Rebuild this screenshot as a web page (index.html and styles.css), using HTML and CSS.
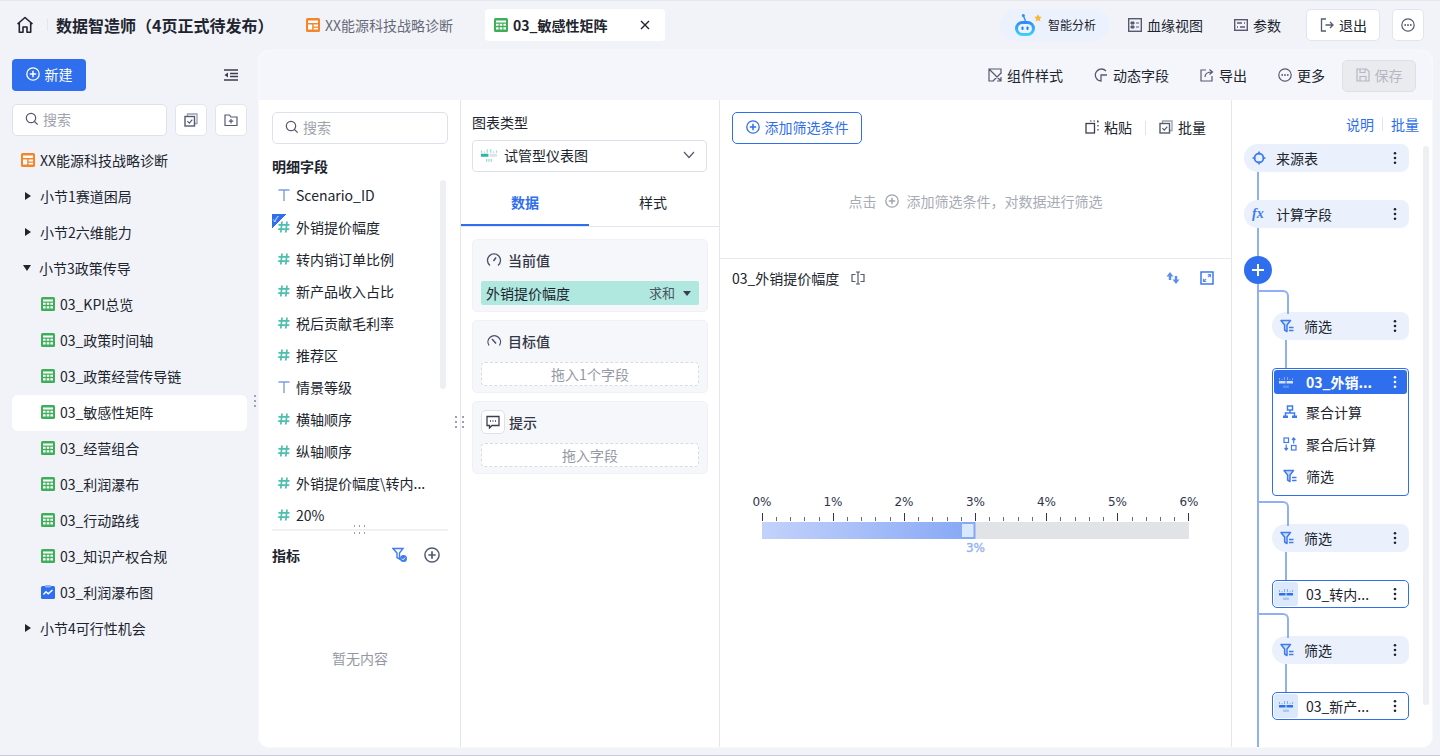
FILE: index.html
```html
<!DOCTYPE html>
<html lang="zh-CN">
<head>
  <meta charset="UTF-8" />
  <title>数据智造师</title>
  <link rel="stylesheet" href="styles.css">
</head>
<body>

<svg class="sprite" width="0" height="0">
  <symbol id="i-dash" viewBox="0 0 14 14"><rect width="14" height="14" rx="1.5" fill="#f5852b"/><path d="M2 2.500h10v2.600H2zM2 6.600h4.200v5H2zM7.600 6.600H12v1.900H7.600zM7.600 9.700H12v1.900H7.600z" fill="#fff"/></symbol>
  <symbol id="i-table" viewBox="0 0 14 14"><rect width="14" height="14" rx="1.500" fill="#3fae5a"/><path d="M2 2.400h10v2H2zM2 5.800h2.600v2H2zM5.700 5.800h2.600v2H5.700zM9.400 5.800H12v2H9.400zM2 9.200h2.600v2.200H2zM5.700 9.200h2.600v2.200H5.700zM9.400 9.200H12v2.200H9.400z" fill="#fff"/></symbol>
  <symbol id="i-chart" viewBox="0 0 14 14"><rect y="1" width="14" height="13" rx="1.500" fill="#2f6fed"/><rect x="4" width="6" height="2.400" rx="1" fill="#8fb0f5"/><path d="M2.500 9.500 5 6.800l2.200 2L11.500 5" fill="none" stroke="#fff" stroke-width="1.400"/></symbol>
  <symbol id="i-search" viewBox="0 0 14 14"><circle cx="6" cy="6" r="4.700" fill="none" stroke="currentColor" stroke-width="1.200"/><path d="m9.500 9.500 3.200 3.200" stroke="currentColor" stroke-width="1.200"/></symbol>
  <symbol id="i-plus" viewBox="0 0 14 14"><circle cx="7" cy="7" r="6.200" fill="none" stroke="currentColor" stroke-width="1.300"/><path d="M7 3.800v6.400M3.800 7h6.400" stroke="currentColor" stroke-width="1.500"/></symbol>
  <symbol id="i-more" viewBox="0 0 14 14"><circle cx="7" cy="7" r="6.200" fill="none" stroke="currentColor" stroke-width="1.200"/><circle cx="4.200" cy="7" r=".9" fill="currentColor"/><circle cx="7" cy="7" r=".9" fill="currentColor"/><circle cx="9.800" cy="7" r=".9" fill="currentColor"/></symbol>
  <symbol id="i-check" viewBox="0 0 14 14"><path d="M3.500 3V1H13v9.500h-2" fill="none" stroke="#9a9eb0" stroke-width="1.300"/><rect x="1" y="3.500" width="9.500" height="9.500" fill="none" stroke="#555a70" stroke-width="1.400"/><path d="m3.400 8.200 1.900 1.900 3-3.400" fill="none" stroke="#555a70" stroke-width="1.200"/></symbol>
  <symbol id="i-kebab" viewBox="0 0 4 14"><circle cx="2" cy="2.200" r="1.300" fill="currentColor"/><circle cx="2" cy="7" r="1.300" fill="currentColor"/><circle cx="2" cy="11.800" r="1.300" fill="currentColor"/></symbol>
  <symbol id="i-hash" viewBox="0 0 12 12"><path d="M4 .5 2.800 11.500M9 .5 7.800 11.500M.5 3.800h11M.2 8.200h11" fill="none" stroke="#4bbfae" stroke-width="1.700"/></symbol>
  <symbol id="i-text" viewBox="0 0 12 12"><path d="M.5 1h11M6 1v11" fill="none" stroke="#7b9fe3" stroke-width="1.400"/></symbol>
  <symbol id="i-filter" viewBox="0 0 14 14"><path d="M1 1.500h9.500L7 6v6.500L4.600 11V6z" fill="#cfdefb" stroke="#3f7bf0" stroke-width="1.500" stroke-linejoin="round"/><path d="M9 8.500h4.500M9 11.500h4.500" stroke="#3f7bf0" stroke-width="1.300"/></symbol>
  <symbol id="i-gauge" viewBox="0 0 14 12"><path d="M0 2h1v2H0zM2.500 3h1v1h-1zM5 1h1v3H5zM8 1h1v3H8zM10.500 3h1v1h-1zM13 2h1v2h-1z" fill="currentColor" opacity=".5"/><path d="M0 5h6.500v2.500H0z" fill="currentColor"/><path d="M7.500 5H14v2.500H7.500z" style="fill: var(--gauge-right, currentColor)"/><path d="M4.500 9.500h1V12h-1zM6.500 9.500h1V12h-1zM8.500 9.500h1V12h-1z" fill="currentColor" opacity=".55"/></symbol>
</svg>

<header class="topbar">
  <svg class="home" width="18" height="18" viewBox="0 0 18 18"><path d="M1.500 8 9 1.500 16.500 8M3.300 7v9.300H7V11h4v5.300h3.700V7" fill="none" stroke="#20242e" stroke-width="1.600" stroke-linejoin="round"/></svg>
  <span class="top-divider"></span>
  <strong class="app-title">数据智造师（4页正式待发布）</strong>
  <div class="tab"><svg width="14" height="14"><use href="#i-dash"/></svg>XX能源科技战略诊断</div>
  <div class="tab active"><svg width="14" height="14"><use href="#i-table"/></svg><b>03_敏感性矩阵</b>
    <svg class="tab-close" width="10" height="10" viewBox="0 0 10 10"><path d="m1 1 8 8M9 1 1 9" stroke="#20242e" stroke-width="1.400"/></svg>
  </div>
  <div class="top-right">
    <div class="ai-pill">
      <svg width="27" height="24" viewBox="0 0 27 24">
        <defs><linearGradient id="robot" x1="0" y1="0" x2="0" y2="1"><stop offset="0" stop-color="#2f86f5"/><stop offset="1" stop-color="#3fd4f7"/></linearGradient></defs>
        <path d="M10.500 8 8.500 3" stroke="#2f8ff0" stroke-width="1.400"/><circle cx="8.300" cy="2.500" r="1.500" fill="#2f8ff0"/>
        <path d="m23 1 1.200 2.500 2.600.5-1.900 1.800.5 2.700-2.400-1.300-2.400 1.300.5-2.700-1.900-1.800 2.600-.5z" fill="#f6b93b"/>
        <rect y="8" width="20" height="15" rx="7.500" fill="url(#robot)"/><rect x="3" y="11" width="14" height="9" rx="4.500" fill="#e8f4ff"/>
        <rect x="6.500" y="13.500" width="2" height="3.500" rx="1" fill="#2f6fed"/><rect x="11.500" y="13.500" width="2" height="3.500" rx="1" fill="#2f6fed"/>
      </svg>
      <span>智能分析</span>
    </div>
    <a class="top-link"><svg width="14" height="14" viewBox="0 0 14 14"><rect x=".7" y=".7" width="12.600" height="12.600" fill="none" stroke="#555a70" stroke-width="1.400"/><path d="M3 4h3v2H3zM3 8h3v2H3zM8 5h3M8 9h3" fill="#555a70" stroke="#555a70"/></svg>血缘视图</a>
    <a class="top-link"><svg width="14" height="14" viewBox="0 0 14 14"><rect x=".7" y="1.700" width="12.600" height="10.600" fill="none" stroke="#555a70" stroke-width="1.400"/><path d="M3 5h5M10 5h1M3 9h1M6 9h5" stroke="#555a70" stroke-width="1.300"/></svg>参数</a>
    <button class="btn exit"><svg width="16" height="16" viewBox="0 0 16 16"><path d="M7 2H2.500v12H7M6.500 8H14M11 5l3 3-3 3" fill="none" stroke="#555a70" stroke-width="1.300"/></svg>退出</button>
    <button class="btn square"><svg width="14" height="14" color="#555a70"><use href="#i-more"/></svg></button>
  </div>
</header>

<div class="app">
  <aside class="sidebar">
    <div class="side-head">
      <button class="btn-new"><svg width="14" height="14"><use href="#i-plus"/></svg>新建</button>
      <svg width="14" height="12" viewBox="0 0 14 12"><path d="M0 1h14M6 4.500h8M6 7.500h8M0 11h14" stroke="#3a3f50" stroke-width="1.400"/><path d="M4 3.500v5L.5 6z" fill="#3a3f50"/></svg>
    </div>
    <div class="side-search">
      <label class="search"><svg width="14" height="14"><use href="#i-search"/></svg><span>搜索</span></label>
      <button class="btn square"><svg width="14" height="14"><use href="#i-check"/></svg></button>
      <button class="btn square"><svg width="14" height="14" viewBox="0 0 14 14"><path d="M1 2h4.500L7 4h6v8.500H1z" fill="none" stroke="#555a70" stroke-width="1.200"/><path d="M7 6v4.500M4.800 8.200h4.500" stroke="#555a70" stroke-width="1.200"/></svg></button>
    </div>
    <ul class="tree">
      <li class="tree-root"><svg width="14" height="14"><use href="#i-dash"/></svg>XX能源科技战略诊断</li>
      <li class="tree-group"><i class="arrow"></i>小节1赛道困局</li>
      <li class="tree-group"><i class="arrow"></i>小节2六维能力</li>
      <li class="tree-group"><i class="arrow open"></i>小节3政策传导</li>
      <li class="tree-leaf"><svg width="14" height="14"><use href="#i-table"/></svg>03_KPI总览</li>
      <li class="tree-leaf"><svg width="14" height="14"><use href="#i-table"/></svg>03_政策时间轴</li>
      <li class="tree-leaf"><svg width="14" height="14"><use href="#i-table"/></svg>03_政策经营传导链</li>
      <li class="tree-leaf selected"><svg width="14" height="14"><use href="#i-table"/></svg>03_敏感性矩阵</li>
      <li class="tree-leaf"><svg width="14" height="14"><use href="#i-table"/></svg>03_经营组合</li>
      <li class="tree-leaf"><svg width="14" height="14"><use href="#i-table"/></svg>03_利润瀑布</li>
      <li class="tree-leaf"><svg width="14" height="14"><use href="#i-table"/></svg>03_行动路线</li>
      <li class="tree-leaf"><svg width="14" height="14"><use href="#i-table"/></svg>03_知识产权合规</li>
      <li class="tree-leaf"><svg width="14" height="14"><use href="#i-chart"/></svg>03_利润瀑布图</li>
      <li class="tree-group"><i class="arrow"></i>小节4可行性机会</li>
    </ul>
  </aside>

  <main class="panel">
    <div class="toolbar">
      <a class="tool"><svg width="14" height="14" viewBox="0 0 14 14"><path d="M13 6V1H1v12h5M1 1l12 12M5 13l8-8M9 13h4V9" fill="none" stroke="#555a70" stroke-width="1.200"/></svg>组件样式</a>
      <a class="tool"><svg width="14" height="14" viewBox="0 0 14 14"><path d="M12 3.200A6 6 0 1 0 7 13V7h6" fill="none" stroke="#555a70" stroke-width="1.300"/></svg>动态字段</a>
      <a class="tool"><svg width="14" height="14" viewBox="0 0 14 14"><path d="M6 2H1v11h11V8M5 9c0-3 2-5 7-5M9.500 1.500 12.500 4l-3 2.500" fill="none" stroke="#555a70" stroke-width="1.200"/></svg>导出</a>
      <a class="tool"><svg width="14" height="14" color="#555a70"><use href="#i-more"/></svg>更多</a>
      <button class="btn-save"><svg width="14" height="14" viewBox="0 0 14 14"><path d="M1 1h9.500L13 3.500V13H1zM4 1v3.500h5V1M4 13V8.500h6V13" fill="none" stroke="#b5b8c2" stroke-width="1.200"/></svg>保存</button>
    </div>

    <div class="columns">
      <section class="col-fields">
        <label class="search"><svg width="14" height="14"><use href="#i-search"/></svg><span>搜索</span></label>
        <h3 class="section-title">明细字段</h3>
        <div class="field-wrap">
          <ul class="field-list">
            <li><svg width="12" height="12"><use href="#i-text"/></svg><span>Scenario_ID</span></li>
            <li class="checked"><svg width="12" height="12"><use href="#i-hash"/></svg><span>外销提价幅度</span></li>
            <li><svg width="12" height="12"><use href="#i-hash"/></svg><span>转内销订单比例</span></li>
            <li><svg width="12" height="12"><use href="#i-hash"/></svg><span>新产品收入占比</span></li>
            <li><svg width="12" height="12"><use href="#i-hash"/></svg><span>税后贡献毛利率</span></li>
            <li><svg width="12" height="12"><use href="#i-hash"/></svg><span>推荐区</span></li>
            <li><svg width="12" height="12"><use href="#i-text"/></svg><span>情景等级</span></li>
            <li><svg width="12" height="12"><use href="#i-hash"/></svg><span>横轴顺序</span></li>
            <li><svg width="12" height="12"><use href="#i-hash"/></svg><span>纵轴顺序</span></li>
            <li><svg width="12" height="12"><use href="#i-hash"/></svg><span>外销提价幅度\转内...</span></li>
            <li><svg width="12" height="12"><use href="#i-hash"/></svg><span>20%</span></li>
          </ul>
          <div class="field-scroll"></div>
        </div>
        <div class="split"><span class="grip-h"></span></div>
        <div class="metric-head">
          <h3 class="section-title">指标</h3>
          <svg width="16" height="16" viewBox="0 0 16 16"><path d="M1 1.500h10L7.500 6v6L5 10.500V6z" fill="none" stroke="#3f7bf0" stroke-width="1.400"/><circle cx="11.500" cy="11.500" r="3.500" fill="#3f7bf0"/><path d="m9.800 11.500 1.300 1.300 2-2.200" fill="none" stroke="#fff"/></svg>
          <svg width="16" height="16" color="#555a70" viewBox="0 0 14 14"><use href="#i-plus"/></svg>
        </div>
        <p class="empty">暂无内容</p>
      </section>

      <section class="col-config">
        <div class="config-top">
          <div class="label">图表类型</div>
          <div class="select">
            <svg class="select-icon" width="16" height="14" color="#2bb5a4"><use href="#i-gauge"/></svg>
            <span>试管型仪表图</span>
            <svg class="chev" width="12" height="8" viewBox="0 0 12 8"><path d="m1 1 5 5.500L11 1" fill="none" stroke="#555a70" stroke-width="1.200"/></svg>
          </div>
        </div>
        <div class="tabs"><div class="tabs-item on">数据</div><div class="tabs-item">样式</div></div>
        <div class="cards">
          <div class="card">
            <div class="card-head"><svg width="16" height="16" viewBox="0 0 16 16"><path d="M4 13.500a6.500 6.500 0 1 1 8 0" fill="none" stroke="#4a4f68" stroke-width="1.300"/><path d="m7.500 9 2.500-3.500" stroke="#4a4f68" stroke-width="1.500"/></svg>当前值</div>
            <div class="pill"><span>外销提价幅度</span><em>求和</em><i class="caret"></i></div>
          </div>
          <div class="card">
            <div class="card-head"><svg width="16" height="16" viewBox="0 0 16 16"><path d="M3 12.500a6.300 6.300 0 1 1 10.500 0" fill="none" stroke="#4a4f68" stroke-width="1.300"/><path d="m6 6 4 4.500" stroke="#4a4f68" stroke-width="1.500"/></svg>目标值</div>
            <div class="drop">拖入1个字段</div>
          </div>
          <div class="card">
            <div class="card-head tip"><span class="tip-icon"><svg width="14" height="14" viewBox="0 0 14 14"><path d="M1 1.500h12v9H6L3.500 13v-2.500H1z" fill="none" stroke="#3a3f50" stroke-width="1.300"/><path d="M4 6h1M6.500 6h1M9 6h1" stroke="#3a3f50" stroke-width="1.300"/></svg></span>提示</div>
            <div class="drop">拖入字段</div>
          </div>
        </div>
        <span class="grip-v col-grip"></span>
      </section>

      <section class="col-chart">
        <div class="filter-zone">
          <div class="filter-head">
            <button class="btn-outline"><svg width="14" height="14"><use href="#i-plus"/></svg>添加筛选条件</button>
            <div class="filter-actions">
              <a class="tool"><svg width="14" height="14" viewBox="0 0 14 14"><rect x="1" y="3.500" width="8.500" height="9.500" fill="none" stroke="#3a3f50" stroke-width="1.300"/><path d="M5 1h1.500M8.500 1H10M12 1h1v1.500M13 5v1.500M13 9v1.500" stroke="#3a3f50" stroke-width="1.200"/></svg>粘贴</a>
              <span class="v-sep"></span>
              <a class="tool"><svg width="14" height="14"><use href="#i-check"/></svg>批量</a>
            </div>
          </div>
          <p class="filter-hint">点击 <svg width="14" height="14" color="#a0a3ad"><use href="#i-plus"/></svg> 添加筛选条件，对数据进行筛选</p>
        </div>
        <div class="chart-head">
          <span>03_外销提价幅度</span>
          <svg class="rename" width="14" height="14" viewBox="0 0 14 14"><path d="M4.500 3.500H1v7h3.500M9.500 3.500H13v7H9.500M5 1h4M5 13h4M7 1v12" fill="none" stroke="#555a70" stroke-width="1.200"/></svg>
          <div class="chart-icons">
            <svg width="14" height="14" viewBox="0 0 14 14"><path d="M4 1 .5 5.500h2.300V9h2.400V5.500h2.300zM10 13l3.500-4.500h-2.300V5H8.800v3.500H6.500z" fill="#5b8ef5"/></svg>
            <svg width="14" height="14" viewBox="0 0 14 14"><rect x="1" y="1" width="12" height="12" fill="none" stroke="#2f6fed" stroke-width="1.400"/><path d="M8 6l2.500-2.500M7.800 3.500h2.700v2.700M6 8l-2.500 2.500M3.500 7.800v2.700h2.700" fill="none" stroke="#5b8ef5" stroke-width="1.200"/></svg>
          </div>
        </div>
        <div class="chart-body">
          <svg class="gauge" width="471" height="64" viewBox="0 0 471 64">
            <defs><linearGradient id="fill"><stop offset="0" stop-color="#c3d2fb"/><stop offset="1" stop-color="#86a7f5"/></linearGradient></defs>
            <g class="gauge-labels" text-anchor="middle">
              <text x="22" y="16">0%</text><text x="93" y="16">1%</text><text x="164" y="16">2%</text><text x="235.500" y="16">3%</text><text x="306.500" y="16">4%</text><text x="377.500" y="16">5%</text><text x="449" y="16">6%</text>
            </g>
            <path d="M22.500 23v8M93.500 23v8M164.500 23v8M235.500 23v8M306.500 23v8M377.500 23v8M448.500 23v8" stroke="#30344e"/>
            <path d="M36.500 27v4M50.500 27v4M64.500 27v4M79.500 27v4M107.500 27v4M121.500 27v4M135.500 27v4M150.500 27v4M178.500 27v4M192.500 27v4M207.500 27v4M221.500 27v4M249.500 27v4M263.500 27v4M278.500 27v4M292.500 27v4M320.500 27v4M335.500 27v4M349.500 27v4M363.500 27v4M392.500 27v4M406.500 27v4M420.500 27v4M434.500 27v4" stroke="#666a82"/>
            <rect x="22" y="32" width="427" height="17" fill="#e2e3e7"/>
            <rect x="22" y="32" width="213.500" height="17" fill="url(#fill)"/>
            <rect x="222" y="34" width="11.500" height="13" fill="#d8e9fd"/>
            <text class="gauge-value" x="235.500" y="62" text-anchor="middle">3%</text>
          </svg>
        </div>
      </section>

      <section class="col-flow">
        <div class="flow-head"><a>说明</a><span class="v-sep"></span><a>批量</a></div>
        <div class="flow">
          <span class="flow-line"></span>
          <span class="flow-scroll"></span>
          <div class="node"><svg width="14" height="14" viewBox="0 0 14 14"><circle cx="7" cy="7" r="4.500" fill="none" stroke="#3f7bf0" stroke-width="1.800"/><path d="M7 .5v3M7 10.500v3M.5 7h3M10.500 7h3" stroke="#3f7bf0" stroke-width="1.600"/></svg><span class="node-name">来源表</span><svg class="kebab" width="4" height="14"><use href="#i-kebab"/></svg></div>
          <div class="node"><span class="fx">fx</span><span class="node-name">计算字段</span><svg class="kebab" width="4" height="14"><use href="#i-kebab"/></svg></div>
          <div class="flow-add"><svg width="14" height="14" viewBox="0 0 14 14"><path d="M7 1v12M1 7h12" stroke="#fff" stroke-width="2"/></svg></div>
          <div class="node branch link first"><svg width="14" height="14"><use href="#i-filter"/></svg><span class="node-name">筛选</span><svg class="kebab" width="4" height="14"><use href="#i-kebab"/></svg></div>
          <div class="group">
            <div class="group-head"><svg width="14" height="12" color="#d5e2fb"><use href="#i-gauge"/></svg><span class="card-name">03_外销...</span><svg class="kebab" width="4" height="14"><use href="#i-kebab"/></svg></div>
            <div class="group-row"><svg width="14" height="14" viewBox="0 0 14 14"><path d="M4.500 1h5v4h-5zM7 5v3M2.500 12V8h9v4" fill="none" stroke="#3f7bf0" stroke-width="1.500"/><path d="M0 10.500h5V13H0zM9 10.500h5V13H9z" fill="#3f7bf0"/></svg>聚合计算</div>
            <div class="group-row"><svg width="14" height="14" viewBox="0 0 14 14"><rect x="1" y="1" width="4.500" height="4.500" fill="none" stroke="#3f7bf0" stroke-width="1.200"/><rect x="8.500" y="8.500" width="4.500" height="4.500" fill="none" stroke="#3f7bf0" stroke-width="1.200"/><path d="M3.200 7.500V13M1.500 11l1.700 2 1.700-2M10.700 6.500V1M9 3l1.700-2 1.700 2" fill="none" stroke="#3f7bf0" stroke-width="1.200"/></svg>聚合后计算</div>
            <div class="group-row"><svg width="14" height="14"><use href="#i-filter"/></svg>筛选</div>
          </div>
          <div class="node branch link"><svg width="14" height="14"><use href="#i-filter"/></svg><span class="node-name">筛选</span><svg class="kebab" width="4" height="14"><use href="#i-kebab"/></svg></div>
          <div class="card-node"><span class="tile"><svg width="14" height="12" color="#2f6fed"><use href="#i-gauge"/></svg></span><span class="card-name">03_转内...</span><svg class="kebab" width="4" height="14"><use href="#i-kebab"/></svg></div>
          <div class="node branch link"><svg width="14" height="14"><use href="#i-filter"/></svg><span class="node-name">筛选</span><svg class="kebab" width="4" height="14"><use href="#i-kebab"/></svg></div>
          <div class="card-node"><span class="tile"><svg width="14" height="12" color="#2f6fed"><use href="#i-gauge"/></svg></span><span class="card-name">03_新产...</span><svg class="kebab" width="4" height="14"><use href="#i-kebab"/></svg></div>
        </div>
      </section>
    </div>
  </main>
</div>

</body>
</html>
```

FILE: styles.css
```css
* { box-sizing: border-box; }
body {
  margin: 0;
  height: 756px;
  overflow: hidden;
  background: #f1f3f9;
  border-bottom: 1px solid #c9cbd2;
  color: #20242e;
  font-family: "Noto Sans CJK SC", "Liberation Sans", sans-serif;
  font-size: 14px;
  line-height: 20px;
}
ul { list-style: none; margin: 0; padding: 0; }
h3, p { margin: 0; }
button { font: inherit; cursor: pointer; }
.sprite { position: absolute; }
svg { flex: none; display: block; }

/* top bar */
.topbar {
  height: 51px;
  display: flex;
  align-items: center;
  padding: 0 16px 2px 16px;
  border-top: 1px solid #e7e8ed;
}
.top-divider { width: 1px; height: 12px; background: #e4e6ee; margin: 0 8px 0 13px; }
.app-title { font-size: 16px; width: 250px; flex: none; white-space: nowrap; }
.tab {
  display: flex;
  align-items: center;
  gap: 5px;
  color: #666a78;
  width: 179px;
  height: 32px;
}
.tab.active {
  width: 180px;
  background: #fff;
  color: #20242e;
  border-radius: 4px;
  padding-left: 9px;
}
.tab-close { margin-left: auto; margin-right: 15px; }
.top-right { margin-left: auto; display: flex; align-items: center; }
.ai-pill {
  width: 110px;
  height: 32px;
  border-radius: 16px;
  background: #ecf2fd;
  display: flex;
  align-items: center;
  gap: 6px;
  padding-left: 15px;
  font-size: 12px;
  margin-right: 18px;
}
.top-link { display: flex; align-items: center; gap: 5px; margin-right: 31px; }
.top-link:nth-child(3) { margin-right: 25px; }
.btn {
  background: #fff;
  border: 1px solid #e3e5ee;
  border-radius: 5px;
  color: #20242e;
  display: flex;
  align-items: center;
  justify-content: center;
  padding: 0;
}
.btn.exit { width: 74px; height: 32px; gap: 4px; margin-right: 12px; }
.btn.square { width: 32px; height: 32px; }

.app { display: flex; height: 696px; }

/* left tree */
.sidebar { width: 259px; flex: none; padding: 8px 12px 0; }
.side-head { display: flex; align-items: center; justify-content: space-between; padding-right: 9px; }
.btn-new {
  width: 74px;
  height: 32px;
  padding: 0 0 2px;
  background: #2f6fed;
  color: #fff;
  border: 0;
  border-radius: 4px;
  display: flex;
  align-items: center;
  justify-content: center;
  gap: 5px;
}
.side-search { display: flex; gap: 8px; margin: 13px 0 7px; }
.search {
  flex: 1;
  height: 32px;
  background: #fff;
  border: 1px solid #dfe1ea;
  border-radius: 5px;
  display: flex;
  align-items: center;
  gap: 4px;
  padding: 0 0 2px 12px;
  color: #a0a3ad;
}
.search svg { color: #555a70; }
.tree li { height: 36px; display: flex; align-items: center; border-radius: 6px; white-space: nowrap; padding-bottom: 2px; }
.tree .tree-root { padding-left: 9px; gap: 5px; }
.tree .tree-group { padding-left: 13px; }
.tree .tree-leaf { padding-left: 29px; gap: 5px; }
.tree-leaf.selected { background: #fff; position: relative; }
.tree-leaf.selected::after {
  content: "";
  position: absolute;
  right: -9px;
  top: 0;
  width: 2px;
  height: 14px;
  background: repeating-linear-gradient(#a0a3ad 0 2px, transparent 2px 5px);
}
.arrow {
  width: 0;
  height: 0;
  border-left: 6px solid #20242e;
  border-top: 4.5px solid transparent;
  border-bottom: 4.5px solid transparent;
  margin-right: 9px;
}
.arrow.open {
  border-top: 6px solid #20242e;
  border-left: 4.5px solid transparent;
  border-right: 4.5px solid transparent;
  border-bottom: 0;
  margin: 0 8px 0 -2px;
}

/* main panel */
.panel {
  width: 1173px;
  flex: none;
  background: #fff;
  border-radius: 10px;
  overflow: hidden;
  box-shadow: 0 0 0 1px #f8f9fc;
}
.toolbar {
  height: 49px;
  background: #f5f6fb;
  display: flex;
  align-items: center;
  justify-content: flex-end;
  gap: 31px;
  padding-right: 16px;
}
.tool { display: flex; align-items: center; gap: 5px; padding-bottom: 2px; }
.btn-save {
  width: 74px;
  height: 32px;
  margin-left: -14px;
  padding: 0 0 2px;
  background: #eaebef;
  border: 1px solid #dfe0e6;
  border-radius: 5px;
  color: #b5b8c2;
  display: flex;
  align-items: center;
  justify-content: center;
  gap: 5px;
}
.columns { display: flex; height: 647px; }

/* fields */
.col-fields { width: 202px; flex: none; border-right: 1px solid #e6e7ee; padding: 12px 12px 0 13px; }
.col-fields .search { flex: none; }
.section-title { font-size: 14px; font-weight: 700; }
.col-fields > .section-title { margin: 12px 0 4px; }
.field-wrap { position: relative; height: 341px; overflow: hidden; }
.field-list li { height: 32px; display: flex; align-items: center; gap: 6px; padding: 0 0 2px 6px; position: relative; white-space: nowrap; }
.field-list li.checked::before {
  content: "✓";
  position: absolute;
  left: 0;
  top: 2px;
  width: 14px;
  height: 14px;
  background: linear-gradient(135deg, #2f6fed 50%, transparent 50%);
  color: #fff;
  font-size: 8px;
  line-height: 9px;
  padding-left: 1px;
}
.field-scroll { position: absolute; right: 2px; top: 0; width: 6px; height: 209px; background: #eeeff2; border-radius: 3px; }
.split { height: 2px; background: #f0f1f3; margin-top: 8px; position: relative; }
.grip-h {
  position: absolute;
  left: 82px;
  top: -4px;
  width: 14px;
  height: 9px;
  background:
    repeating-linear-gradient(90deg, #9da0aa 0 1px, transparent 1px 5px) top / 100% 2px no-repeat,
    repeating-linear-gradient(90deg, #9da0aa 0 1px, transparent 1px 5px) bottom / 100% 2px no-repeat;
}
.metric-head { display: flex; align-items: center; margin-top: 14px; }
.metric-head .section-title { margin-right: auto; }
.metric-head svg { margin-right: 8px; }
.metric-head svg + svg { margin-left: 8px; }
.empty { text-align: center; color: #9598a3; margin-top: 83px; }

/* config */
.col-config { width: 259px; flex: none; position: relative; border-right: 1px solid #e6e7ee; }
.config-top { padding: 12px 12px 0 11px; }
.label { margin-bottom: 8px; }
.select {
  height: 32px;
  border: 1px solid #dfe1ea;
  border-radius: 4px;
  display: flex;
  align-items: center;
  padding: 0 11px 2px 8px;
  gap: 7px;
}
.select-icon { --gauge-right: #dfe1e6; }
.chev { margin-left: auto; }
.tabs { display: flex; margin-top: 16px; height: 39px; border-bottom: 1px solid #e4e6ee; }
.tabs-item { width: 128px; text-align: center; line-height: 28px; }
.tabs-item.on { color: #2f6fed; font-weight: 700; border-bottom: 2px solid #2f6fed; height: 38px; }
.cards { padding: 12px 11px 0; display: flex; flex-direction: column; gap: 8px; }
.card { height: 73px; background: #f6f7fa; border: 1px solid #f0f1f5; border-radius: 5px; padding: 0 8px; }
.card-head { height: 41px; display: flex; align-items: center; gap: 6px; padding: 0 0 2px 5px; font-weight: 500; color: #333747; }
.card-head.tip { padding-left: 0; gap: 4px; }
.tip-icon {
  width: 24px;
  height: 24px;
  background: #fff;
  border: 1px solid #dfe1ea;
  border-radius: 5px;
  display: flex;
  align-items: center;
  justify-content: center;
}
.pill {
  height: 24px;
  background: #b0e8e0;
  border-radius: 2px;
  display: flex;
  align-items: center;
  padding: 0 8px 0 5px;
}
.pill em { margin-left: auto; font-style: normal; font-size: 13px; color: #4a5560; }
.caret {
  margin-left: 8px;
  border-top: 5px solid #3a3f50;
  border-left: 4px solid transparent;
  border-right: 4px solid transparent;
}
.drop {
  height: 24px;
  background: #fff;
  border: 1px dashed #d9dbe3;
  border-radius: 4px;
  text-align: center;
  color: #9598a3;
  line-height: 22px;
}
.grip-v {
  position: absolute;
  left: -6px;
  top: 316px;
  width: 9px;
  height: 14px;
  background:
    repeating-linear-gradient(#9da0aa 0 2px, transparent 2px 5px) left / 2px 100% no-repeat,
    repeating-linear-gradient(#9da0aa 0 2px, transparent 2px 5px) right / 2px 100% no-repeat;
}

/* chart */
.col-chart { width: 512px; flex: none; border-right: 1px solid #e6e7ee; display: flex; flex-direction: column; }
.filter-zone { height: 159px; border-bottom: 1px solid #e8e9ef; padding: 12px 12px 0; flex: none; }
.filter-head { display: flex; align-items: center; justify-content: space-between; padding-right: 13px; }
.btn-outline {
  width: 130px;
  height: 32px;
  padding: 0 0 2px;
  background: #fff;
  border: 1px solid #2f6fed;
  border-radius: 5px;
  color: #2f6fed;
  display: flex;
  align-items: center;
  justify-content: center;
  gap: 5px;
}
.filter-actions { display: flex; align-items: center; gap: 13px; }
.v-sep { width: 1px; height: 14px; background: #e2e4ea; }
.filter-hint {
  margin-top: 47px;
  display: flex;
  align-items: center;
  justify-content: center;
  gap: 8px;
  color: #a8abb5;
}
.chart-head { height: 38px; display: flex; align-items: center; padding: 0 17px 0 12px; flex: none; }
.rename { margin-left: 12px; }
.chart-icons { margin-left: auto; display: flex; gap: 20px; }
.chart-body { flex: 1; display: flex; align-items: center; justify-content: center; }
.gauge-labels text { font-family: "DejaVu Sans", sans-serif; font-size: 12px; fill: #30344e; }
.gauge-value { font-family: "DejaVu Sans", sans-serif; font-size: 12px; fill: #8fb0f5; stroke: #8fb0f5; stroke-width: .3px; }

/* flow */
.col-flow { flex: 1; position: relative; }
.flow-head { display: flex; align-items: center; justify-content: flex-end; gap: 8px; color: #2f6fed; padding: 4px 13px 0 0; height: 44px; }
.flow { position: relative; padding: 0 23px 0 12px; height: 603px; }
.flow-line { position: absolute; left: 25px; top: 28px; bottom: 0; width: 2px; background: #8fb0f5; }
.flow-scroll { position: absolute; right: 3px; top: 2px; width: 6px; height: 559px; background: #eeeff2; border-radius: 3px; }
.node {
  position: relative;
  height: 28px;
  background: #eaf1fd;
  border-radius: 14px 8px 8px 14px;
  display: flex;
  align-items: center;
  padding: 0 12px 0 8px;
  margin-bottom: 28px;
}
.node-name { margin-left: 10px; white-space: nowrap; }
.kebab { margin-left: auto; color: #20242e; }
.fx { width: 14px; color: #3f7bf0; font-style: italic; font-weight: 700; font-family: "Liberation Serif", serif; }
.flow-add {
  position: relative;
  width: 28px;
  height: 28px;
  border-radius: 50%;
  background: #2f6fed;
  display: flex;
  align-items: center;
  justify-content: center;
  margin-bottom: 28px;
}
.branch { margin-left: 28px; }
.branch::before {
  content: "";
  position: absolute;
  left: -14px;
  top: -23px;
  width: 29px;
  height: 23px;
  border-top: 2px solid #8fb0f5;
  border-right: 2px solid #8fb0f5;
  border-top-right-radius: 6px;
}
.branch.first::before { top: -22px; height: 22px; }
.link::after {
  content: "";
  position: absolute;
  left: 13px;
  bottom: -28px;
  width: 2px;
  height: 28px;
  background: #8fb0f5;
}
.group {
  position: relative;
  margin: 0 0 28px 28px;
  height: 128px;
  background: #fff;
  border: 1px solid #2f6fed;
  border-radius: 4px;
  padding: 1px;
}
.group-head {
  height: 24px;
  background: #2f6fed;
  border-radius: 3px;
  color: #fff;
  font-weight: 700;
  display: flex;
  align-items: center;
  padding: 0 10px 0 5px;
}
.group-head .kebab { color: #fff; }
.card-name { margin-left: 13px; white-space: nowrap; }
.group-row { height: 32px; display: flex; align-items: center; gap: 9px; padding-left: 9px; }
.group-head + .group-row { margin-top: 2px; }
.card-node {
  position: relative;
  margin: 0 0 28px 28px;
  height: 28px;
  background: #fff;
  border: 1px solid #2f6fed;
  border-radius: 5px;
  display: flex;
  align-items: center;
  padding: 0 11px 0 1px;
}
.tile { width: 24px; height: 24px; background: #dce8fc; border-radius: 3px; display: flex; align-items: center; justify-content: center; }
.card-node .card-name { margin-left: 8px; }
```
